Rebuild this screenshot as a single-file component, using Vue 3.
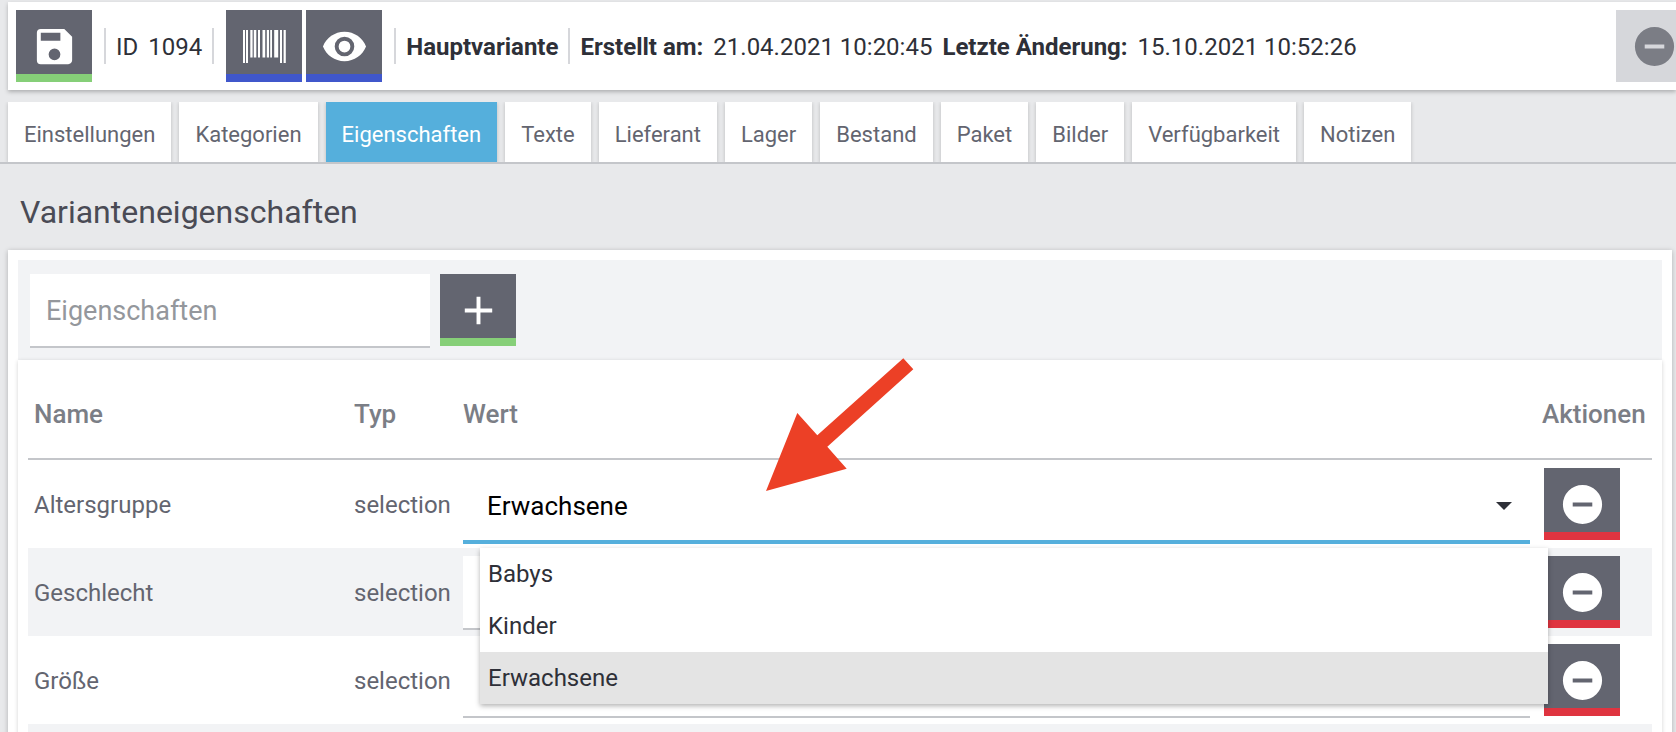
<script setup>
import { ref } from 'vue'

const tabs = ['Einstellungen', 'Kategorien', 'Eigenschaften', 'Texte', 'Lieferant', 'Lager', 'Bestand', 'Paket', 'Bilder', 'Verfügbarkeit', 'Notizen']
const activeTab = ref('Eigenschaften')
const options = ['Babys', 'Kinder', 'Erwachsene']
const rows = ref([
  { name: 'Altersgruppe', type: 'selection', value: 'Erwachsene', options, open: true },
  { name: 'Geschlecht', type: 'selection', value: '', options: [], open: false },
  { name: 'Größe', type: 'selection', value: '', options: [], open: false },
])

function choose(row, option) {
  row.value = option
  row.open = false
}
</script>

<template>
  <div class="page">
    <header class="toolbar">
      <button class="tool green" type="button" aria-label="Speichern">
        <svg width="47" height="47" viewBox="0 0 24 24"><path d="M17 3H5a2 2 0 0 0-2 2v14a2 2 0 0 0 2 2h14c1.100 0 2-.9 2-2V7l-4-4zm-5 16a3 3 0 1 1 0-6 3 3 0 0 1 0 6zm3-10H5V5h10v4z" /></svg>
      </button>
      <div class="ident"><span>ID</span><span>1094</span></div>
      <div class="pair">
        <button class="tool blue" type="button" aria-label="Barcode">
          <svg width="43" height="33" viewBox="0 0 43 33">
            <path d="M0 0h2v33H0zM3 0h2v33H3zM7.300 0h2.300v27.500H7.300zM10.800 0h2.500v27.500h-2.500zM15 0h2v27.500h-2zM19.500 0h2.700v27.500h-2.700zM23.800 0H26v27.500h-2.200zM27.200 0H29v27.500h-1.800zM31.200 0h4v27.500h-4zM37 0h2v33h-2zM40.600 0h2.200v33h-2.200z" />
          </svg>
        </button>
        <button class="tool blue" type="button" aria-label="Vorschau">
          <svg width="47" height="47" viewBox="0 0 24 24"><path d="M12 4.500C7 4.500 2.730 7.610 1 12c1.730 4.390 6 7.500 11 7.500s9.270-3.110 11-7.500c-1.730-4.390-6-7.500-11-7.500zM12 17a5 5 0 1 1 0-10 5 5 0 0 1 0 10zm0-8a3 3 0 1 0 0 6 3 3 0 0 0 0-6z" /></svg>
        </button>
      </div>
      <strong class="variant">Hauptvariante</strong>
      <div class="meta">
        <strong>Erstellt am:</strong><span>21.04.2021 10:20:45</span>
        <strong>Letzte Änderung:</strong><span>15.10.2021 10:52:26</span>
      </div>
      <button class="tool off" type="button" disabled aria-label="Löschen">
        <svg width="47" height="47" viewBox="0 0 24 24"><path d="M12 2a10 10 0 1 0 0 20 10 10 0 0 0 0-20zm5 11H7v-2h10v2z" /></svg>
      </button>
    </header>

    <nav class="tabs">
      <button v-for="tab in tabs" :key="tab" type="button" class="tab" :class="{ active: tab === activeTab }" @click="activeTab = tab">{{ tab }}</button>
    </nav>

    <h1>Varianteneigenschaften</h1>

    <section class="panel">
      <div class="adder">
        <input type="text" placeholder="Eigenschaften" aria-label="Eigenschaften" />
        <button class="tool green" type="button" aria-label="Hinzufügen">
          <svg width="47" height="47" viewBox="0 0 24 24"><path d="M19 13h-6v6h-2v-6H5v-2h6V5h2v6h6v2z" /></svg>
        </button>
      </div>
      <div class="card">
        <table>
          <thead>
            <tr>
              <th class="name">Name</th>
              <th class="type">Typ</th>
              <th>Wert</th>
              <th class="actions">Aktionen</th>
            </tr>
          </thead>
          <tbody>
            <tr v-for="row in rows" :key="row.name">
              <td><span class="label">{{ row.name }}</span></td>
              <td><span class="label">{{ row.type }}</span></td>
              <td>
                <div class="field" :class="{ open: row.open }">
                  <select v-model="row.value" :aria-label="row.name">
                    <option v-for="option in row.options" :key="option">{{ option }}</option>
                  </select>
                  <svg class="caret" width="16" height="8" viewBox="0 0 16 8"><path d="M0 0h16L8 8z" /></svg>
                  <div v-if="row.open" class="menu" role="listbox">
                    <button v-for="option in row.options" :key="option" type="button" role="option" :aria-selected="option === row.value" :class="{ chosen: option === row.value }" @click="choose(row, option)">{{ option }}</button>
                  </div>
                </div>
              </td>
              <td>
                <button class="tool red" type="button" :aria-label="row.name + ' entfernen'">
                  <svg width="47" height="47" viewBox="0 0 24 24"><path d="M12 2a10 10 0 1 0 0 20 10 10 0 0 0 0-20zm5 11H7v-2h10v2z" /></svg>
                </button>
              </td>
            </tr>
            <tr><td colspan="4"></td></tr>
          </tbody>
        </table>
        <svg class="pointer" width="148" height="133" viewBox="0 0 148 133" aria-hidden="true">
          <path d="M137.300 .3l10 11-86 77.400 19.400 22L0 133l31.300-78 20 22.300z" />
        </svg>
      </div>
    </section>
  </div>
</template>

<style>
body {
  margin: 0;
  background: #e8e9eb;
}
</style>

<style scoped>
.page {
  box-sizing: border-box;
  height: 100vh;
  overflow: hidden;
  padding-top: 2px;
  background: #e8e9eb;
  color: #2e3038;
  font: 24px/28px Roboto, "Liberation Sans", sans-serif;
}
button, input, select {
  box-sizing: border-box;
  margin: 0;
  border: 0;
  border-radius: 0;
  font-family: inherit;
}
.toolbar {
  display: flex;
  align-items: center;
  height: 88px;
  margin-left: 8px;
  padding-left: 8px;
  background: #fff;
  box-shadow: 0 2px 4px rgba(0, 0, 0, 0.25);
  white-space: nowrap;
}
.tool {
  display: flex;
  flex: none;
  align-items: center;
  justify-content: center;
  width: 76px;
  height: 72px;
  padding: 9px 0 0;
  border-bottom: 8px solid;
  background: #636570;
}
.tool svg {
  display: block;
  fill: #fff;
}
.green { border-color: #86cf78; }
.blue { border-color: #4057cb; }
.red { border-color: #df3440; }
.off {
  margin: 0 -16px 0 auto;
  border-color: #d6d7db;
  background: #d6d7db;
}
.off svg { fill: #7b7d85; }
.ident, .variant, .meta {
  display: flex;
  box-sizing: border-box;
  align-items: center;
  gap: 10px;
  height: 36px;
  padding: 2px 10px 0;
}
.ident, .variant {
  border-left: 2px solid #d6d7db;
  border-right: 2px solid #d6d7db;
}
.ident { margin: 0 12px; }
.variant { margin-left: 12px; }
.pair {
  display: flex;
  gap: 4px;
}
.tabs {
  display: flex;
  gap: 8px;
  margin-top: 12px;
  padding-left: 8px;
  overflow: hidden;
  border-bottom: 2px solid #c4c6ca;
}
.tab {
  height: 60px;
  padding: 4px 16px 0;
  background: #fff;
  box-shadow: 0 1px 4px rgba(0, 0, 0, 0.2);
  color: #636570;
  font-size: 22px;
}
.tab.active {
  background: #55afdc;
  color: #fff;
}
h1 {
  margin: 28px 0 18px 20px;
  color: #4a4b55;
  font-size: 32px;
  font-weight: 400;
  line-height: 40px;
}
.panel {
  margin: 0 4px 0 8px;
  padding: 10px;
  background: #fff;
  box-shadow: 0 1px 5px rgba(0, 0, 0, 0.25);
}
.adder {
  display: flex;
  gap: 10px;
  padding: 14px 12px 12px;
  background: #f2f3f5;
}
.adder input {
  width: 400px;
  height: 74px;
  padding: 2px 16px 0;
  border-bottom: 2px solid #c4c6ca;
  background: #fff;
  font-size: 27px;
}
.adder input::placeholder { color: #94979c; opacity: 1; }
.card {
  position: relative;
  padding: 10px;
  background: #fff;
  box-shadow: 0 1px 4px rgba(0, 0, 0, 0.18);
}
table {
  width: 100%;
  border-collapse: separate;
  border-spacing: 0;
}
th, td {
  box-sizing: border-box;
  height: 88px;
  padding: 0 6px;
  color: #636570;
  text-align: left;
}
th {
  height: 90px;
  border-bottom: 2px solid #c4c6ca;
  color: #7b7e86;
  font-size: 26px;
  font-weight: 500;
}
.name { width: 320px; }
.type { width: 109px; }
.actions { width: 116px; }
tbody tr:nth-child(even) { background: #f2f3f5; }
.label {
  display: block;
  padding-top: 2px;
}
td .tool { margin-left: 2px; }
.field {
  position: relative;
  height: 72px;
  border-bottom: 2px solid #c4c6ca;
  margin-bottom: -2px;
  background: #fff;
}
.field.open {
  border-bottom: 4px solid #55afdc;
  margin-bottom: -4px;
}
.field select {
  width: 100%;
  height: 72px;
  padding: 4px 60px 0 24px;
  appearance: none;
  background: transparent;
  color: #000;
  font-size: 26px;
}
.caret {
  position: absolute;
  top: 34px;
  right: 18px;
  fill: #2e3038;
}
.menu {
  position: absolute;
  z-index: 2;
  top: 80px;
  right: -18px;
  left: 17px;
  background: #fff;
  box-shadow: 0 2px 5px rgba(0, 0, 0, 0.3);
}
.menu button {
  display: block;
  width: 100%;
  height: 52px;
  padding: 0 8px;
  background: #fff;
  color: #2e3038;
  font-size: 24px;
  text-align: left;
}
.menu .chosen { background: #e4e4e4; }
.pointer {
  position: absolute;
  z-index: 3;
  top: -2px;
  left: 748px;
  fill: #ec4026;
  pointer-events: none;
}
</style>
